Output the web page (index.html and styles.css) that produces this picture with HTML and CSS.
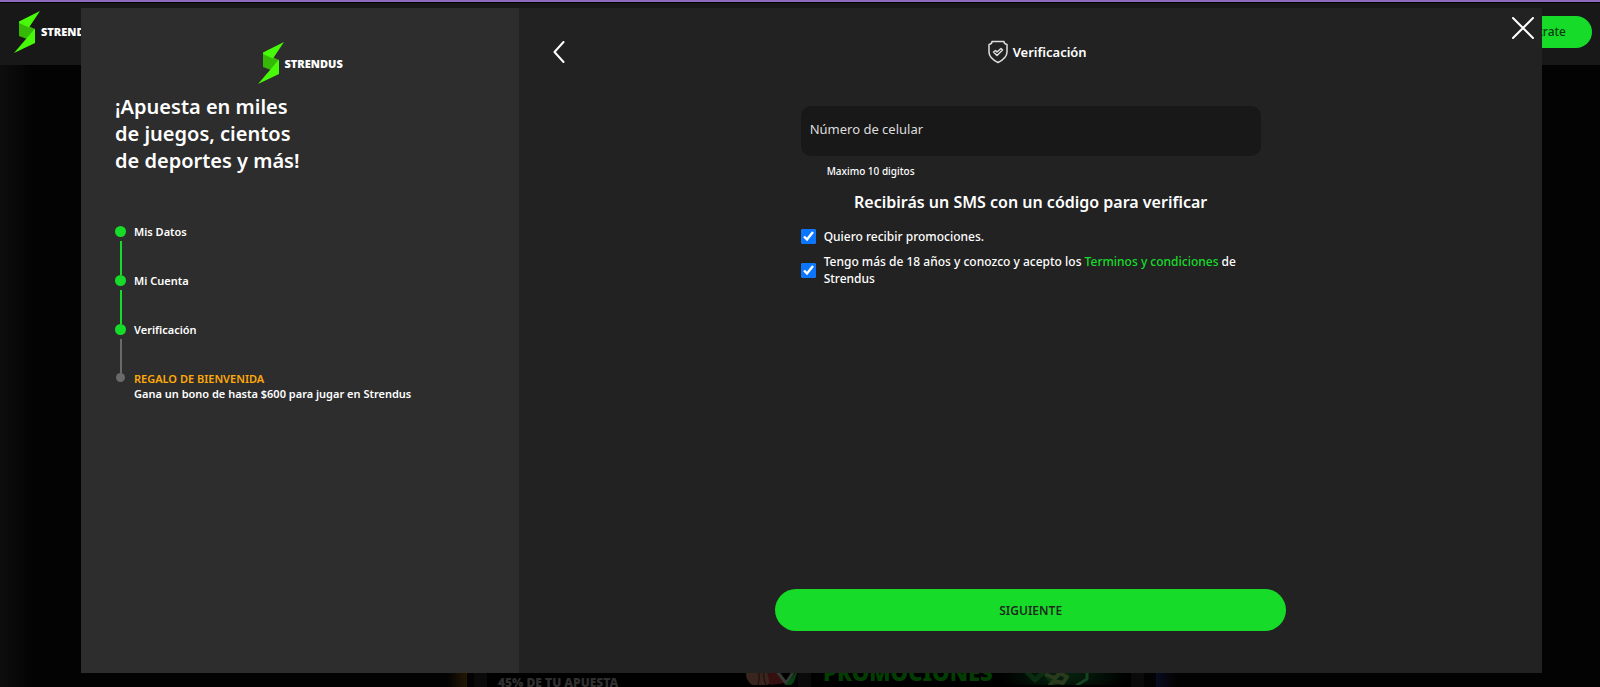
FILE: index.html
```html
<!DOCTYPE html>
<html lang="es">
<head>
<meta charset="utf-8">
<meta name="viewport" content="width=device-width, initial-scale=1">
<title>Strendus - Verificación</title>
<link rel="stylesheet" href="styles.css">
</head>
<body>
<svg width="0" height="0" class="defs" aria-hidden="true">
  <symbol id="bolt" viewBox="0 0 26 42">
    <path fill="#36b906" d="M5 11 21 18 21 31 5 25Z"/>
    <path fill="#47fb08" d="M26 0 5 10.500V12L15 16.500Z"/>
    <path fill="#47fb08" d="M21 17.500V32L0 42 12 28Z"/>
  </symbol>
</svg>
<div class="site">
  <header class="topbar">
    <a class="logo" href="#"><svg class="bolt"><use href="#bolt"/></svg><span>STRENDUS</span></a>
    <button class="register" type="button">Regístrate</button>
  </header>
  <div class="banners">
    <div class="side side-gold"></div>
    <section class="banner">
      <p class="bonus">RECIBE UN BONO DE HASTA<br>45% DE TU APUESTA</p>
      <svg class="art art-ball" viewBox="0 0 52 30">
        <ellipse cx="14" cy="19" rx="14" ry="13" fill="#39241e"/>
        <path d="M8 8Q16 18 12 30M20 8Q15 20 20 30" stroke="#160c0a" fill="none"/>
        <path d="M21 16 29 14 39 28 24 30Z" fill="#35100f"/>
        <path d="M30 15 40 28 48 16" stroke="#353a36" stroke-width="3" fill="none"/>
        <path d="M39 30 52 15 48 27 45 30Z" fill="#073f12"/>
      </svg>
    </section>
    <section class="banner banner-promo">
      <p class="promo">PROMOCIONES</p>
      <svg class="art art-chips" viewBox="0 0 132 30">
        <defs><radialGradient id="glow"><stop offset="0" stop-color="#06250f"/><stop offset="1" stop-color="#000"/></radialGradient></defs>
        <ellipse cx="65" cy="20" rx="65" ry="22" fill="url(#glow)"/>
        <path d="M27 16 36 25 45 17 56 30" stroke="#0a2c10" stroke-width="5" fill="none"/>
        <path d="M48 20 56 23 61 18 68 22 64 28 55 26 51 30" stroke="#2a3a1d" stroke-width="4" fill="none"/>
        <path d="M88 14V24L78 30" stroke="#174325" stroke-width="3" fill="none"/>
      </svg>
    </section>
    <div class="side side-blue"></div>
  </div>
</div>

<div class="overlay">
  <div class="modal" role="dialog" aria-modal="true" aria-label="Registro">
    <aside class="intro">
      <div class="logo intro-logo"><svg class="bolt"><use href="#bolt"/></svg><span>STRENDUS</span></div>
      <h1 class="headline">¡Apuesta en miles<br>de juegos, cientos<br>de deportes y más!</h1>
      <ol class="steps">
        <li class="step">Mis Datos</li>
        <li class="step">Mi Cuenta</li>
        <li class="step step-current">Verificación</li>
        <li class="step step-pending"><span class="gift">REGALO DE BIENVENIDA</span>Gana un bono de hasta $600 para jugar en Strendus</li>
      </ol>
    </aside>
    <main class="content">
      <button class="close" type="button" aria-label="Cerrar"><svg width="22" height="22" viewBox="0 0 22 22"><path d="M1 1 21 21M21 1 1 21"/></svg></button>
      <header class="content-head">
        <button class="back" type="button" aria-label="Volver"><svg width="12" height="22" viewBox="0 0 12 22"><path d="M10.500 1 1.500 11 10.500 21"/></svg></button>
        <h2 class="title">
          <svg width="20" height="24" viewBox="0 0 20 24"><path d="M4 1.500H16Q16 4 19 4.500V12Q19 18 10 22.500 1 18 1 12V4.500Q4 4 4 1.500Z"/><path d="M5.500 12 7.500 10.500 9 12 13 8.500 14.500 10 9 15.500Z"/></svg>
          Verificación
        </h2>
      </header>
      <form class="form">
        <div class="fields">
          <input class="phone" id="phone" type="tel" maxlength="10" placeholder="Número de celular" aria-label="Número de celular" aria-describedby="hint">
          <p class="hint" id="hint">Maximo 10 digitos</p>
          <p class="sms">Recibirás un SMS con un código para verificar</p>
          <div class="check"><input type="checkbox" id="promos" checked><label for="promos">Quiero recibir promociones.</label></div>
          <div class="check"><input type="checkbox" id="terms" checked><label for="terms">Tengo más de 18 años y conozco y acepto los <a href="#">Terminos y condiciones</a> de Strendus</label></div>
        </div>
        <button class="next" type="submit">SIGUIENTE</button>
      </form>
    </main>
  </div>
</div>
</body>
</html>
```
FILE: styles.css
```css
* { box-sizing: border-box; }
body {
  margin: 0;
  background: #030303;
  color: #fff;
  font-family: "Noto Sans", "Open Sans", sans-serif;
  font-size: 13px;
}
h1, h2, p, ol { margin: 0; padding: 0; }
button { border: 0; padding: 0; font: inherit; cursor: pointer; }
.defs { position: absolute; }

.site {
  display: flex;
  flex-direction: column;
  justify-content: space-between;
  height: 100vh;
  overflow: hidden;
  background: linear-gradient(90deg, #0e0e0e, #030303 32px);
}
.topbar {
  display: flex;
  justify-content: space-between;
  align-items: center;
  height: 65px;
  padding: 0 8px 4px 14px;
  border-top: 2px solid #8f6bc0;
  background: #181818;
  box-shadow: inset 0 1px #000;
}
.logo {
  display: flex;
  align-items: center;
  gap: 1px;
  color: #fff;
  font-size: 11px;
  font-weight: 900;
  text-decoration: none;
}
.bolt { width: 26px; height: 42px; }
.register {
  width: 112px;
  height: 32px;
  padding-right: 26px;
  border-radius: 16px;
  background: #16dc29;
  color: #0c3a10;
  font-size: 12px;
  font-weight: 500;
  text-align: right;
}
.banners {
  display: grid;
  grid-template-columns: calc(50% - 326px) 311px 320px 1fr;
  column-gap: 13px;
  height: 32px;
}
.side-gold { margin-right: 7px; background: linear-gradient(270deg, #241703, transparent 20px); }
.side-blue { margin-left: 12px; background: linear-gradient(90deg, #090b20, transparent 20px); }
.banner {
  display: flex;
  justify-content: space-between;
  background: #000;
  box-shadow: 0 0 0 13px #0a0a0a;
}
.bonus {
  margin-left: 11px;
  padding-top: 7px;
  color: #303030;
  font-size: 12px;
  font-weight: 900;
  line-height: 14px;
  white-space: nowrap;
}
.promo { margin-left: 12px; color: #033d03; font-size: 22px; font-weight: 900; line-height: 34px; }
.art { height: 30px; flex: none; }
.art-ball { width: 52px; }
.art-chips { width: 132px; }

.overlay {
  position: fixed;
  inset: 0;
  display: flex;
  padding: 8px 58px 14px 81px;
}
.modal {
  display: grid;
  grid-template-columns: 3fr 7fr;
  flex: 1;
  background: #222;
}
.intro { padding: 34px; background: #2d2d2d; }
.intro-logo { justify-content: center; }
.headline {
  margin-top: 9px;
  font-size: 20px;
  font-weight: 600;
  line-height: 27px;
}
.steps { margin-top: 50px; list-style: none; }
.step {
  position: relative;
  min-height: 49px;
  padding-left: 19px;
  font-size: 11px;
  font-weight: 600;
  line-height: 15px;
}
.step::before {
  content: "";
  position: absolute;
  top: 2px;
  left: 0;
  width: 11px;
  height: 11px;
  border-radius: 50%;
  background: #16dc29;
}
.step::after {
  content: "";
  position: absolute;
  top: 17px;
  bottom: -2px;
  left: 5px;
  width: 2px;
  background: #16dc29;
}
.step-current::after { background: #6a6a6a; }
.step-pending::before { left: 1px; width: 9px; height: 9px; background: #6a6a6a; }
.step-pending::after { display: none; }
.gift { display: block; color: #ffa90a; }

.content {
  position: relative;
  display: flex;
  flex-direction: column;
}
.close {
  position: absolute;
  top: 9px;
  right: 8px;
  width: 22px;
  height: 22px;
  background: none;
}
svg path { stroke-linecap: round; stroke-linejoin: round; }
.close svg, .back svg { display: block; fill: none; stroke: #fff; stroke-width: 2; }
.content-head {
  display: grid;
  grid-template-columns: 1fr auto 1fr;
  align-items: center;
  height: 88px;
  padding: 0 21px 0 34px;
}
.back { width: 12px; background: none; }
.title {
  display: flex;
  align-items: center;
  gap: 5px;
  font-size: 13px;
  font-weight: 600;
  line-height: 24px;
}
.title svg { fill: none; stroke: #ddd; stroke-width: 1.5; }
.form {
  display: flex;
  flex-direction: column;
  align-items: center;
  justify-content: space-between;
  flex: 1;
  padding: 10px 32px 42px;
}
.fields { width: 100%; max-width: 460px; }
.phone {
  display: block;
  width: 100%;
  height: 50px;
  padding: 0 9px 5px;
  border: 0;
  border-radius: 10px;
  background: #181818;
  color: #fff;
  font: inherit;
}
.phone::placeholder { color: #ddd; opacity: 1; }
.hint {
  margin: 8px 0 0 26px;
  font-size: 10px;
  font-weight: 500;
  line-height: 14px;
}
.sms {
  margin: 12px 0 14px;
  font-size: 16px;
  font-weight: 600;
  line-height: 24px;
  text-align: center;
}
.check {
  display: flex;
  align-items: center;
  gap: 8px;
  margin-top: 8px;
  font-size: 12px;
  font-weight: 500;
  line-height: 17px;
}
.check input { flex: none; width: 15px; height: 15px; margin: 0; accent-color: #0a75ff; }
.check a { color: #16dc29; text-decoration: none; }
.next {
  width: 100%;
  max-width: 511px;
  height: 42px;
  border-radius: 21px;
  background: #16dc29;
  color: #1d2b1e;
  font-size: 12px;
  font-weight: 600;
}
```
